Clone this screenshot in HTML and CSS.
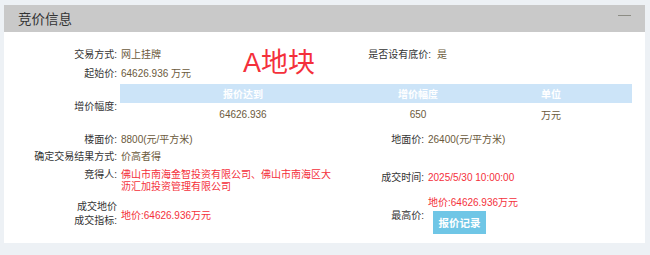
FILE: index.html
```html
<!DOCTYPE html>
<html lang="zh">
<head>
<meta charset="utf-8">
<title>竞价信息</title>
<link rel="stylesheet" href="styles.css">
</head>
<body>
<div class="panel">
  <div class="panel-head">
    <span class="panel-title">竞价信息</span>
    <span class="collapse"></span>
  </div>
  <div class="panel-body">
    <div class="stamp">A地块</div>
    <div class="row r1">
      <div class="lbl">交易方式:</div>
      <div class="val">网上挂牌</div>
      <div class="lbl lbl-wide">是否设有底价:</div>
      <div class="val val-wide">是</div>
    </div>
    <div class="row r2">
      <div class="lbl">起始价:</div>
      <div class="val">64626.936 万元</div>
    </div>
    <div class="row r3">
      <div class="lbl">增价幅度:</div>
      <div class="span3">
        <table class="bid-table">
          <thead>
            <tr><th class="c1">报价达到</th><th class="c2">增价幅度</th><th class="c3">单位</th></tr>
          </thead>
          <tbody>
            <tr><td>64626.936</td><td>650</td><td>万元</td></tr>
          </tbody>
        </table>
      </div>
    </div>
    <div class="row r4">
      <div class="lbl">楼面价:</div>
      <div class="val">8800(元/平方米)</div>
      <div class="lbl">地面价:</div>
      <div class="val">26400(元/平方米)</div>
    </div>
    <div class="row r5">
      <div class="lbl">确定交易结果方式:</div>
      <div class="val">价高者得</div>
    </div>
    <div class="row r6">
      <div class="lbl">竞得人:</div>
      <div class="val red multi">佛山市南海金智投资有限公司、佛山市南海区大沥汇加投资管理有限公司</div>
      <div class="lbl lbl-time">成交时间:</div>
      <div class="val red val-time">2025/5/30 10:00:00</div>
    </div>
    <div class="row r7">
      <div class="lbl lbl-two">成交地价<br>成交指标:</div>
      <div class="val red">地价:64626.936万元</div>
      <div class="lbl">最高价:</div>
      <div class="val top-price">
        <div class="red">地价:64626.936万元</div>
        <button class="btn-record" type="button">报价记录</button>
      </div>
    </div>
  </div>
</div>
</body>
</html>
```

FILE: styles.css
```css
html, body {
  margin: 0;
  padding: 0;
}
body {
  background: #edf1f5;
  width: 650px;
  height: 255px;
  padding: 5px 5px 0 4px;
  box-sizing: border-box;
  font-family: "Liberation Sans", "Noto Sans CJK SC", sans-serif;
  font-size: 10px;
  color: #333;
}
.panel {
  width: 641px;
  height: 238px;
  background: #fff;
}
.panel-head {
  height: 27px;
  background: #c9c9c9;
  display: flex;
  align-items: center;
  justify-content: space-between;
  padding: 0 14px 0 14px;
}
.panel-title {
  font-family: "Noto Sans CJK SC", sans-serif;
  font-size: 13.5px;
  color: #333;
  line-height: 27px;
}
.collapse {
  width: 13px;
  height: 0;
  border-top: 1.5px solid #8c8c84;
  margin-top: -6px;
}
.panel-body {
  position: relative;
  padding-top: 12px;
}
.stamp {
  position: absolute;
  left: 239px;
  top: 15px;
  font-family: "Liberation Sans", "Noto Sans CJK SC", sans-serif;
  font-size: 27px;
  line-height: 32px;
  color: #f4303b;
}
.row {
  display: grid;
  grid-template-columns: 116px 212px 95px 205px;
  align-items: center;
}
.lbl {
  text-align: right;
  padding-right: 3px;
  color: #333;
  white-space: nowrap;
}
.lbl-wide {
  margin-right: -7px;
}
.val {
  padding-left: 1px;
  color: #6b5a3c;
}
.val-wide {
  padding-left: 10px;
}
.red {
  color: #f4303b;
}
.r1 { height: 18px; }
.r2 { height: 18px; margin-top: 1px; }
.r3 { margin-top: 3px; height: 42px; }
.r4 { height: 18px; margin-top: 3px; }
.r5 { height: 16px; }
.r6 { margin-top: 6px; align-items: start; }
.r7 { margin-top: 1px; height: 38px; }
.multi {
  line-height: 12px;
  padding-right: 0;
}
.r6 .lbl {
  line-height: 12px;
}
.lbl-time,
.val-time {
  padding-top: 3px;
}
.lbl-two {
  line-height: 14px;
}
.span3 {
  grid-column: 2 / 5;
  padding-left: 0;
}
.bid-table {
  width: 512px;
  border-collapse: collapse;
  table-layout: fixed;
}
.bid-table th {
  background: #cce4f8;
  color: #fff;
  font-weight: bold;
  height: 19px;
  padding: 0;
  font-size: 10px;
}
.bid-table td {
  text-align: center;
  color: #6b5a3c;
  height: 23px;
  padding: 0;
}
.bid-table .c1 { width: 246px; }
.bid-table .c2 { width: 104px; }
.bid-table .c3 { width: 162px; }
.top-price {
  display: flex;
  flex-direction: column;
  align-items: flex-start;
  gap: 2px;
}
.btn-record {
  margin-left: 5px;
  width: 53px;
  height: 23px;
  border: 0;
  background: #6fc6e6;
  color: #fff;
  font-family: "Liberation Sans", "Noto Sans CJK SC", sans-serif;
  font-weight: bold;
  font-size: 10.5px;
  padding: 0;
}
```
